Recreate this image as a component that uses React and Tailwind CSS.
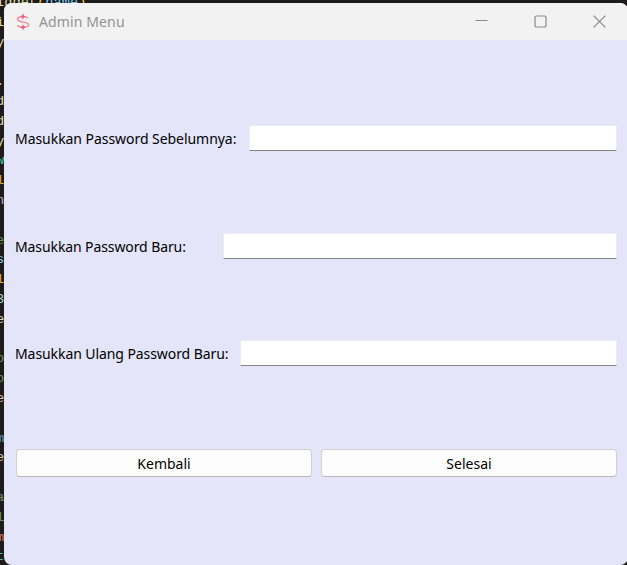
import React from 'react';

const codeLines = [
  null,
  ['i', 'text-[#dcdcaa]'],
  ['y', 'text-[#dcdcaa]'],
  ['', ''],
  ['.', 'text-[#d4d4d4]'],
  ['d', 'text-[#dcdcaa]'],
  ['d', 'text-[#dcdcaa]'],
  ['y', 'text-[#dcdcaa]'],
  ['w', 'text-[#3dc9a0]'],
  ['l', 'text-[#e8b030]'],
  ['n', 'text-[#c4a3c0]'],
  ['', ''],
  ['e', 'text-[#6a9955]'],
  ['s', 'text-[#7cc8f0]'],
  ['l', 'text-[#e8b030]'],
  ['3', 'text-[#a0dcc8]'],
  ['e', 'text-[#dcdcaa]'],
  ['', ''],
  ['o', 'text-[#6a9955]'],
  ['o', 'text-[#6a9955]'],
  ['e', 'text-[#dcc8a0]'],
  ['', ''],
  ['m', 'text-[#569cd6]'],
  ['e', 'text-[#dcc8a0]'],
  ['', ''],
  ['a', 'text-[#6a9955]'],
  ['l', 'text-[#6a9955]'],
  ['m', 'text-[#ce7c60]'],
  ['t', 'text-[#3dc9a0]'],
];

function CodeEditor() {
  return (
    <div className="-ml-[4px] -mt-[7px] font-['Liberation_Mono',monospace] text-[13.7px] leading-[19.8px]">
      {codeLines.map((line, i) => (
        <div key={i} className="h-[19.8px] whitespace-pre">
          {line ? (
            <span className={line[1]}>{line[0]}</span>
          ) : (
            <>
              <span className="text-[#dcdcaa]">idget</span>
              <span className="text-[#ffd700]">(</span>
              <span className="text-[#7cc8f0]">name</span>
              <span className="text-[#ffd700]">)</span>
            </>
          )}
        </div>
      ))}
    </div>
  );
}

function TitleBar() {
  return (
    <div className="flex h-[37px] shrink-0 items-center bg-[#f2f2f2] pl-3">
      <svg className="h-[18px] w-[14px]" viewBox="0 0 14 18" fill="none" stroke="#f4788f">
        <path d="M7 5v8" strokeWidth="1" opacity=".2" />
        <path d="M11.800 5.200C11 4 9.500 3.600 7 3.600C3.500 3.600 1.500 4.500 1.500 6.300C1.500 8.300 4 8.500 7 9C10.500 9.500 12.700 10 12.700 12C12.700 13.800 10 14.200 7 14.200C4.500 14.200 2.500 13.800 1.500 12.300" strokeWidth="1.2" />
        <path d="M7 .5L8 2.600L10 3.600L8 4.600L7 6.500L6 4.600L4 3.600L6 2.600ZM7 11.500L8 13.200L10 14.200L8 15.200L7 17.500L6 15.200L4 14.200L6 13.200Z" fill="#f2607c" stroke="none" />
      </svg>
      <span className="ml-[9px] text-[14px] leading-5 tracking-[0.12px] text-[#929292]">Admin Menu</span>
      <div className="ml-auto mr-[22px] flex items-center gap-[46px]">
        <svg className="h-[13px] w-[13px]" viewBox="0 0 13 13" fill="none" stroke="#898989">
          <path d="M.5 5.500h12" />
        </svg>
        <svg className="h-[13px] w-[13px]" viewBox="0 0 13 13" fill="none" stroke="#898989" strokeWidth="1.2">
          <rect x="1" y="1" width="11" height="11" rx="1.3" />
        </svg>
        <svg className="h-[13px] w-[13px]" viewBox="0 0 13 13" fill="none" stroke="#898989" strokeWidth="1.2">
          <path d="M.6 .6l11.800 11.800M12.400 .6L.6 12.400" />
        </svg>
      </div>
    </div>
  );
}

function Field({ label, labelClass }) {
  return (
    <label className="flex h-[26px] items-center gap-3">
      <span className={`shrink-0 whitespace-nowrap pt-0.5 text-[14px] leading-5 ${labelClass}`}>{label}</span>
      <input
        type="password"
        className="h-[26px] min-w-0 flex-1 border border-[#ececf0] border-b-[#868686] bg-white outline-none"
      />
    </label>
  );
}

function Button({ children }) {
  return (
    <button className="flex h-7 flex-1 items-center justify-center rounded-[4px] border border-[#d0d0d0] border-b-[#bababa] bg-[#fdfdfd] pt-0.5 text-[14px] leading-5">
      {children}
    </button>
  );
}

export default function App() {
  return (
    <div className="relative h-[565px] w-[627px] overflow-hidden bg-[#1f1b1a]">
      <CodeEditor />
      <div className="absolute left-[4px] top-[3px] flex h-[562px] w-[624px] flex-col overflow-hidden rounded-[8px] bg-[#e4e5f9] font-['Noto_Sans',sans-serif] text-black">
        <TitleBar />
        <div className="flex flex-col px-[11px] pt-[85px]">
          <Field label="Masukkan Password Sebelumnya:" labelClass="w-[222px] tracking-[-0.05px]" />
          <div className="mt-[82px]">
            <Field label="Masukkan Password Baru:" labelClass="w-[196px] tracking-[-0.1px]" />
          </div>
          <div className="mt-[81px]">
            <Field label="Masukkan Ulang Password Baru:" labelClass="w-[213px] tracking-[-0.08px]" />
          </div>
          <div className="mt-[83px] flex gap-[9px] pl-px">
            <Button>Kembali</Button>
            <Button>Selesai</Button>
          </div>
        </div>
      </div>
    </div>
  );
}
